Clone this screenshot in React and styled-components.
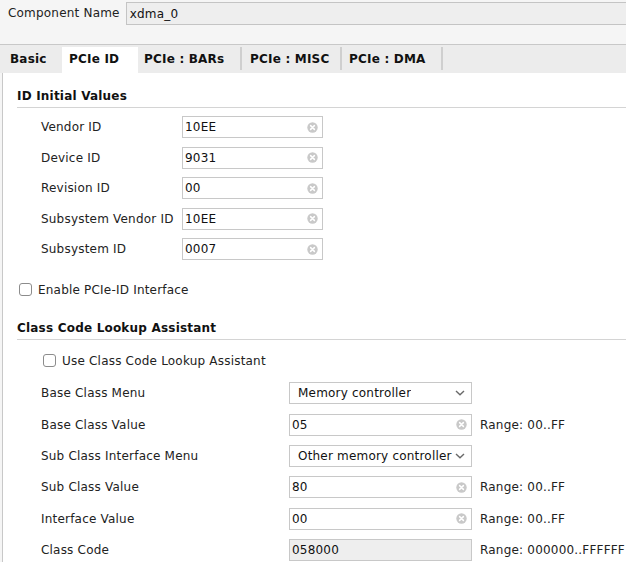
import React from "react";
import styled, { createGlobalStyle } from "styled-components";

const Global = createGlobalStyle`
  html, body { margin: 0; padding: 0; }
  body {
    background: #f5f5f5;
    font-family: "DejaVu Sans", "Liberation Sans", sans-serif;
    font-size: 12px;
    letter-spacing: 0.2px;
    color: #222;
    overflow: hidden;
  }
`;

const Page = styled.div`
  width: 626px;
  height: 562px;
  display: flex;
  flex-direction: column;
  overflow: hidden;
`;

const TopBar = styled.div`
  flex-shrink: 0;
  height: 44px;
  display: flex;
  align-items: flex-start;
  padding-left: 8px;
  box-sizing: border-box;
  background: #f5f5f5;
`;

const TopLabel = styled.span`
  margin-top: 6px;
  line-height: 15px;
  margin-right: 6px;
  white-space: nowrap;
`;

const NameField = styled.div`
  flex: 1;
  margin-top: 2px;
  height: 23px;
  box-sizing: border-box;
  border: 1px solid #c4c4c4;
  border-right: none;
  background: #eeeeee;
  padding: 0 3px;
  display: flex;
  align-items: center;
  color: #111;
`;

const TabBar = styled.div`
  flex-shrink: 0;
  border-top: 1px solid #c8c8c8;
  height: 29px;
  box-sizing: border-box;
  padding-top: 2px;
  background: #ececec;
  display: flex;
`;

const Tab = styled.div`
  position: relative;
  width: ${(p) => p.$w}px;
  padding-left: ${(p) => p.$pad}px;
  box-sizing: border-box;
  font-weight: bold;
  display: flex;
  align-items: center;
  padding-bottom: 3px;
  white-space: nowrap;
  background: ${(p) => (p.$active ? "#ffffff" : "transparent")};
  color: #111;
  &::after {
    content: "";
    display: ${(p) => (p.$sep ? "block" : "none")};
    position: absolute;
    right: 0;
    top: 0;
    bottom: 3px;
    width: 2px;
    background: #cfcfcf;
  }
`;

const Panel = styled.div`
  flex: 1;
  margin-left: 2px;
  border-left: 1px solid #c8c8c8;
  background: #ffffff;
  padding-left: 14px;
  display: flex;
  flex-direction: column;
`;

const SectionTitle = styled.div`
  flex-shrink: 0;
  padding-top: ${(p) => p.$top}px;
  padding-bottom: 3px;
  line-height: 15px;
  font-weight: bold;
  color: #111;
  border-bottom: 1px solid #d4d4d4;
`;

const Rows = styled.div`
  flex-shrink: 0;
  margin-top: ${(p) => p.$top}px;
  display: flex;
  flex-direction: column;
`;

const Row = styled.div`
  flex-shrink: 0;
  height: ${(p) => p.$h}px;
  display: grid;
  grid-template-columns: ${(p) => p.$label}px ${(p) => p.$field}px auto;
  align-items: center;
  padding-left: 24px;
`;

const Label = styled.span`
  white-space: nowrap;
  color: #222;
`;

const Field = styled.div`
  height: 22px;
  box-sizing: border-box;
  border: 1px solid #c8c8c8;
  background: ${(p) => (p.$disabled ? "#eeeeee" : "#ffffff")};
  display: flex;
  align-items: center;
  padding: 0 ${(p) => (p.$select ? 8 : 2)}px;
  padding-right: ${(p) => (p.$select ? 6 : 4)}px;
  color: #111;
  justify-content: space-between;
  white-space: nowrap;
`;

const FieldText = styled.span`
  overflow: hidden;
`;

const Range = styled.span`
  margin-left: 8px;
  white-space: nowrap;
  color: #222;
`;

const CheckRow = styled.label`
  flex-shrink: 0;
  display: flex;
  align-items: center;
  height: 20px;
  margin-top: ${(p) => p.$top}px;
  padding-left: ${(p) => p.$indent}px;
  gap: 6px;
  color: #222;
`;

const Box = styled.span`
  width: 13px;
  height: 13px;
  box-sizing: border-box;
  border: 1px solid #8c8c8c;
  border-radius: 3px;
  background: #fff;
`;

const ClearIcon = () => (
  <svg width="11" height="11" viewBox="0 0 11 11">
    <circle cx="5.5" cy="5.5" r="5.2" fill="#c9c9c9" />
    <path d="M3.6 3.6 L7.4 7.4 M7.4 3.6 L3.6 7.4" stroke="#fff" strokeWidth="1.5" strokeLinecap="round" />
  </svg>
);

const Chevron = () => (
  <svg width="10" height="6" viewBox="0 0 10 6">
    <path d="M1 1 L5 4.8 L9 1" fill="none" stroke="#6a6a6a" strokeWidth="1.4" />
  </svg>
);

const tabs = [
  { name: "Basic", w: 62, pad: 10, sep: false },
  { name: "PCIe ID", w: 76, pad: 7, active: true, sep: false },
  { name: "PCIe : BARs", w: 104, pad: 6, sep: true },
  { name: "PCIe : MISC", w: 100, pad: 8, sep: true },
  { name: "PCIe : DMA", w: 101, pad: 7, sep: true },
];

const idRows = [
  ["Vendor ID", "10EE"],
  ["Device ID", "9031"],
  ["Revision ID", "00"],
  ["Subsystem Vendor ID", "10EE"],
  ["Subsystem ID", "0007"],
];

const classRows = [
  { label: "Base Class Menu", value: "Memory controller", kind: "select" },
  { label: "Base Class Value", value: "05", kind: "text", range: "Range: 00..FF" },
  { label: "Sub Class Interface Menu", value: "Other memory controller", kind: "select" },
  { label: "Sub Class Value", value: "80", kind: "text", range: "Range: 00..FF" },
  { label: "Interface Value", value: "00", kind: "text", range: "Range: 00..FF" },
  { label: "Class Code", value: "058000", kind: "disabled", range: "Range: 000000..FFFFFF" },
];

export default function App() {
  return (
    <Page>
      <Global />
      <TopBar>
        <TopLabel>Component Name</TopLabel>
        <NameField>xdma_0</NameField>
      </TopBar>
      <TabBar>
        {tabs.map((t) => (
          <Tab key={t.name} $w={t.w} $pad={t.pad} $active={t.active} $sep={t.sep}>
            {t.name}
          </Tab>
        ))}
      </TabBar>
      <Panel>
        <SectionTitle $top={16}>ID Initial Values</SectionTitle>
        <Rows $top={4}>
          {idRows.map(([l, v]) => (
            <Row key={l} $h={30.5} $label={141} $field={141}>
              <Label>{l}</Label>
              <Field>
                <FieldText>{v}</FieldText>
                <ClearIcon />
              </Field>
            </Row>
          ))}
        </Rows>
        <CheckRow $top={15} $indent={2}>
          <Box />
          Enable PCIe-ID Interface
        </CheckRow>
        <SectionTitle $top={21}>Class Code Lookup Assistant</SectionTitle>
        <CheckRow $top={11} $indent={26}>
          <Box />
          Use Class Code Lookup Assistant
        </CheckRow>
        <Rows $top={7}>
          {classRows.map((r) => (
            <Row key={r.label} $h={31.4} $label={248} $field={183}>
              <Label>{r.label}</Label>
              <Field $select={r.kind === "select"} $disabled={r.kind === "disabled"}>
                <FieldText>{r.value}</FieldText>
                {r.kind === "select" && <Chevron />}
                {r.kind === "text" && <ClearIcon />}
              </Field>
              {r.range ? <Range>{r.range}</Range> : <span />}
            </Row>
          ))}
        </Rows>
      </Panel>
    </Page>
  );
}
